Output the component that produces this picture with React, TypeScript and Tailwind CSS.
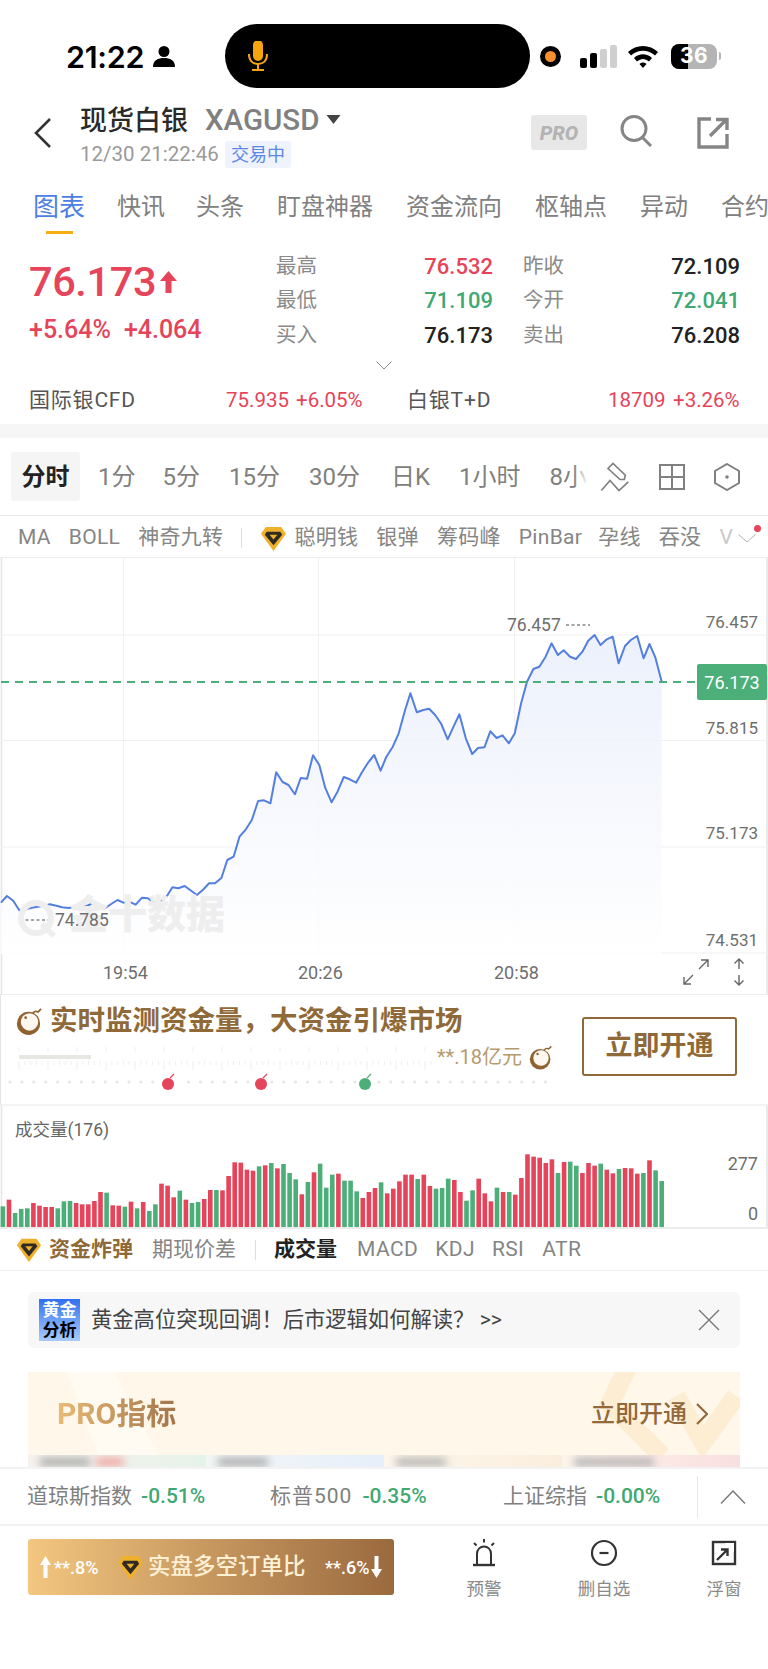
import React from "react";

const linePts: [number, number][] = [[2,1028],[14,1008],[27,1022],[40,1052],[52,1048],[65,1043],[77,1040],[90,1037],[102,1033],[115,1037],[127,1042],[140,1044],[152,1041],[165,1041],[177,1038],[190,1029],[202,1032],[215,1044],[227,1032],[240,1020],[252,1028],[265,1026],[277,1034],[290,1013],[302,1015],[315,1029],[327,1024],[340,1010],[352,982],[364,985],[377,978],[389,991],[402,1005],[414,990],[427,970],[439,970],[452,954],[464,900],[477,890],[489,830],[502,808],[514,780],[527,723],[539,721],[552,730],[564,637],[577,666],[589,675],[602,703],[614,654],[627,656],[639,586],[652,615],[664,683],[677,727],[689,695],[702,651],[714,658],[727,668],[739,637],[752,607],[764,585],[777,632],[789,590],[802,560],[814,520],[827,450],[838,400],[851,457],[864,450],[876,446],[889,466],[901,492],[914,538],[926,500],[938,463],[951,535],[964,582],[976,564],[989,562],[1001,514],[1014,534],[1026,526],[1039,550],[1051,520],[1064,430],[1076,365],[1089,327],[1101,320],[1114,290],[1126,250],[1139,285],[1151,271],[1164,290],[1176,297],[1189,275],[1201,242],[1214,225],[1226,255],[1239,238],[1251,230],[1263,310],[1276,258],[1288,240],[1301,228],[1314,295],[1326,252],[1338,292],[1351,365]];

const toPt = ([x, y]: [number, number]) => `${(x / 2.0417).toFixed(1)},${(y / 3 + 2).toFixed(1)}`;
const linePath = linePts.map(toPt).join(" ");
const areaPath = `${linePath} 661.7,396 1,396`;

const bars: [number, string][] = [[680,"g"],[660,"r"],[700,"g"],[688,"g"],[686,"g"],[670,"r"],[678,"r"],[682,"r"],[682,"r"],[686,"g"],[665,"g"],[664,"g"],[670,"r"],[674,"r"],[674,"r"],[664,"r"],[637,"r"],[639,"g"],[677,"r"],[678,"r"],[681,"g"],[666,"r"],[686,"g"],[667,"r"],[694,"g"],[674,"g"],[612,"r"],[618,"r"],[653,"r"],[633,"g"],[660,"r"],[670,"g"],[667,"g"],[658,"r"],[631,"r"],[631,"g"],[632,"r"],[589,"r"],[548,"r"],[549,"r"],[570,"r"],[573,"r"],[560,"g"],[557,"r"],[550,"g"],[566,"r"],[553,"g"],[580,"g"],[599,"g"],[644,"r"],[607,"g"],[578,"r"],[552,"g"],[624,"g"],[585,"g"],[582,"r"],[603,"g"],[603,"g"],[635,"g"],[655,"r"],[637,"r"],[625,"r"],[608,"g"],[641,"r"],[627,"r"],[605,"r"],[585,"r"],[585,"r"],[598,"g"],[585,"r"],[619,"r"],[627,"g"],[625,"g"],[597,"g"],[601,"r"],[637,"r"],[663,"g"],[632,"g"],[597,"r"],[641,"r"],[665,"r"],[624,"g"],[637,"r"],[637,"g"],[645,"r"],[595,"r"],[524,"r"],[531,"r"],[534,"r"],[550,"r"],[539,"r"],[580,"g"],[547,"r"],[546,"g"],[558,"g"],[580,"r"],[550,"r"],[558,"r"],[552,"g"],[570,"r"],[581,"r"],[568,"g"],[565,"r"],[566,"r"],[582,"r"],[580,"g"],[542,"r"],[572,"g"],[604,"g"]];

function Gem({ className }: { className: string }) {
  return (
    <svg viewBox="0 0 28 28" className={className}>
      <polygon points="6,2 22,2 27,9 14,27 1,9" fill="#efb02c" />
      <polygon points="7,7 21,7 23,10 14,21 5,10" fill="#2f2a22" />
      <polygon points="10,10 18,10 14,15" fill="#efb02c" />
    </svg>
  );
}

function Bomb({ className }: { className: string }) {
  return (
    <svg viewBox="0 0 28 30" className={className}>
      <path d="M17 8 C18 4 21 4 23 5 L26 2" fill="none" stroke="#8f6230" strokeWidth="1.8" />
      <circle cx="13" cy="17" r="12" fill="#8f6230" />
      <circle cx="14" cy="15.5" r="9" fill="#fdf8ef" />
      <circle cx="10" cy="11" r="1.4" fill="#8f6230" />
    </svg>
  );
}

function StatRow({ a, av, ac, b, bv, bc }: { a: string; av: string; ac: string; b: string; bv: string; bc: string }) {
  return (
    <div className="grid grid-cols-[217px_217px] gap-x-[30px] h-[34.5px] items-center">
      <div className="flex justify-between items-center">
        <span className="text-[20.5px] text-[#8a8a8a]">{a}</span>
        <span className={`text-[22px] font-medium ${ac}`}>{av}</span>
      </div>
      <div className="flex justify-between items-center">
        <span className="text-[20.5px] text-[#8a8a8a]">{b}</span>
        <span className={`text-[22px] font-medium ${bc}`}>{bv}</span>
      </div>
    </div>
  );
}

export default function App() {
  return (
    <div className="w-[768px] h-[1669px] bg-white flex flex-col overflow-hidden font-['Roboto','Noto_Sans_CJK_SC',sans-serif] text-[#222]">
      {/* status bar */}
      <div className="h-[100px] pt-[24px] shrink-0">
        <div className="h-[64px] flex items-center">
          <span className="ml-[66px] w-[80px] mt-[1px] text-[30.5px] font-semibold text-black font-['Inter',sans-serif] tracking-[-0.3px] whitespace-nowrap">21:22</span>
          <svg viewBox="0 0 22 21" className="ml-[7px] w-[22px] h-[21px]">
            <circle cx="11" cy="5.5" r="5.5" fill="#000" />
            <path d="M0 21 C0 14 5 12 11 12 C17 12 22 14 22 21 Z" fill="#000" />
          </svg>
          <div className="ml-[50px] w-[305px] h-[64px] bg-black rounded-full flex items-center pl-[23px]">
            <svg viewBox="0 0 20 30" className="w-[20px] h-[30px]" fill="none" stroke="#f7a50f" strokeWidth="2">
              <rect x="6" y="0" width="8" height="19" rx="4" fill="#f7a50f" />
              <path d="M1 13 C1 20 5 23 10 23 C15 23 19 20 19 13" />
              <path d="M10 23 V29 M4 29 H16" />
            </svg>
          </div>
          <div className="ml-[10px] w-[21px] h-[21px] rounded-full bg-black flex items-center justify-center">
            <div className="w-[11px] h-[11px] rounded-full bg-[#f98f2c]" />
          </div>
          <div className="ml-[19px] flex items-end gap-[3px] h-[23px]">
            <div className="w-[7px] h-[10px] rounded-[2px] bg-black" />
            <div className="w-[7px] h-[15px] rounded-[2px] bg-black" />
            <div className="w-[7px] h-[19px] rounded-[2px] bg-[#cfcfcf]" />
            <div className="w-[7px] h-[23px] rounded-[2px] bg-[#cfcfcf]" />
          </div>
          <svg viewBox="1 0 30 24" className="ml-[10px] w-[32px] h-[24px]">
            <path d="M1 8 C9 0 23 0 31 8 L28 11.5 C21.5 5 10.5 5 4 11.5 Z" fill="#000" />
            <path d="M7 14 C12 9 20 9 25 14 L22 17.5 C18 14 14 14 10 17.5 Z" fill="#000" />
            <path d="M12.5 20 C14.5 18 17.5 18 19.5 20 L16 24 Z" fill="#000" />
          </svg>
          <div className="ml-[12px] relative w-[46px] h-[25px] rounded-[8px] overflow-hidden bg-[#b4b4b4] flex items-center justify-center">
            <div className="absolute left-0 top-0 bottom-0 w-[17px] bg-black" />
            <span className="relative text-[21px] font-bold text-white font-['Inter',sans-serif] tracking-[0.5px]">36</span>
          </div>
          <div className="ml-[2px] w-[2px] h-[8px] rounded-r bg-[#b4b4b4]" />
        </div>
      </div>

      {/* header */}
      <div className="h-[90px] shrink-0 flex items-start">
        <svg viewBox="0 0 18 30" className="ml-[33px] mt-[18px] w-[18px] h-[30px]" fill="none" stroke="#333" strokeWidth="2.6">
          <path d="M17 1 L3 15 L17 29" />
        </svg>
        <div className="ml-[29px] flex flex-col">
          <div className="flex items-center h-[36px] mt-[3px]">
            <span className="text-[27px] font-medium text-[#2a2a2a] leading-none">现货白银</span>
            <span className="ml-[17px] text-[29.5px] font-medium text-[#808080] leading-none">XAGUSD</span>
            <svg viewBox="0 0 14 9" className="ml-[6px] w-[15px] h-[9px] mb-[4px]"><polygon points="0,0 14,0 7,9" fill="#444" /></svg>
          </div>
          <div className="flex items-center">
            <span className="text-[20.5px] text-[#9a9a9a] w-[145px] whitespace-nowrap">12/30 21:22:46</span>
            <span className="w-[66px] h-[27px] rounded-[3px] bg-[#eef3fe] text-[#5b87e6] text-[18px] flex items-center justify-center">交易中</span>
          </div>
        </div>
        <div className="ml-auto flex items-start pr-[39px] mt-[15px]">
          <div className="w-[56px] h-[35px] rounded-[3px] bg-[#e7e7e7] flex items-center justify-center text-[20px] font-extrabold italic text-[#b3b3b3]">PRO</div>
          <svg viewBox="0 0 32 32" className="ml-[33px] w-[32px] h-[32px]" fill="none" stroke="#858585" strokeWidth="3">
            <circle cx="14" cy="13.5" r="12" />
            <path d="M23 23 L31 31" />
          </svg>
          <svg viewBox="0 0 32 32" className="ml-[45px] mt-[2px] w-[32px] h-[32px]" fill="none" stroke="#858585" strokeWidth="3.4">
            <path d="M14 2 H2 V30 H30 V17" />
            <path d="M13 19 L29 3 M19 2.5 H30 V13" />
          </svg>
        </div>
      </div>

      {/* tabs */}
      <div className="h-[48px] shrink-0 flex gap-[33px] pl-[33px] overflow-hidden text-[24px] leading-[34px] text-[#808080] whitespace-nowrap">
        <div className="flex flex-col shrink-0">
          <span className="text-[#4f7fe3] text-[26px]">图表</span>
          <div className="mx-auto mt-[7px] w-[27px] h-[3px] bg-[#f6ad14]" />
        </div>
        <span className="shrink-0 -ml-[1px]">快讯</span>
        <span className="shrink-0 -ml-[2px]">头条</span>
        <span className="shrink-0">盯盘神器</span>
        <span className="shrink-0">资金流向</span>
        <span className="shrink-0">枢轴点</span>
        <span className="shrink-0">异动</span>
        <span className="shrink-0">合约</span>
      </div>

      {/* quote */}
      <div className="h-[115px] shrink-0 flex">
        <div className="w-[276px] pl-[29px] pt-[19px] shrink-0">
          <div className="flex items-center h-[50px]">
            <span className="text-[41.5px] font-medium text-[#e5445a] tracking-[-0.4px] leading-none">76.173</span>
            <svg viewBox="0 0 17 22" className="ml-[4px] w-[17px] h-[22px]"><path d="M8.5 0 L17 10 H11.5 V22 H5.5 V10 H0 Z" fill="#e5445a" /></svg>
          </div>
          <div className="mt-[8px] flex gap-[13px] h-[30px] items-center text-[25px] font-medium text-[#e5445a] whitespace-nowrap">
            <span>+5.64%</span>
            <span>+4.064</span>
          </div>
        </div>
        <div className="pt-[11px]">
          <StatRow a="最高" av="76.532" ac="text-[#e5445a]" b="昨收" bv="72.109" bc="text-[#222]" />
          <StatRow a="最低" av="71.109" ac="text-[#3fa873]" b="今开" bv="72.041" bc="text-[#3fa873]" />
          <StatRow a="买入" av="76.173" ac="text-[#222]" b="卖出" bv="76.208" bc="text-[#222]" />
        </div>
      </div>
      <div className="h-[24px] shrink-0 flex items-center justify-center">
        <svg viewBox="0 0 16 9" className="w-[16px] h-[9px]" fill="none" stroke="#8a8a8a" strokeWidth="1"><path d="M0.5 0.5 L8 8 L15.5 0.5" /></svg>
      </div>
      <div className="h-[47px] shrink-0 flex items-center text-[20.5px] whitespace-nowrap">
        <span className="ml-[29px] w-[197px] text-[21px] tracking-[0.8px] text-[#555]">国际银CFD</span>
        <span className="w-[70px] text-[#e5445a]">75.935</span>
        <span className="w-[111px] text-[#e5445a]">+6.05%</span>
        <span className="w-[201px] text-[21px] tracking-[0.8px] text-[#555]">白银T+D</span>
        <span className="w-[65px] text-[#e5445a]">18709</span>
        <span className="text-[#e5445a]">+3.26%</span>
      </div>
      <div className="h-[14px] shrink-0 bg-[#f6f6f6]" />

      {/* timeframes */}
      <div className="h-[78px] shrink-0 flex items-center pl-[11px] border-b border-[#e8e8e8]">
        <div className="w-[69px] h-[49px] rounded-[3px] bg-[#f5f5f5] flex items-center justify-center text-[24px] font-bold text-[#222] shrink-0">分时</div>
        <div className="ml-[18px] w-[490px] shrink-0 flex gap-[29px] overflow-hidden whitespace-nowrap text-[24px] text-[#808080] relative">
          <span>1分</span>
          <span className="-ml-[2px]">5分</span>
          <span>15分</span>
          <span>30分</span>
          <span className="ml-[2px]">日K</span>
          <span>1小时</span>
          <span>8小时</span>
          <div className="absolute right-0 top-0 bottom-0 w-[14px] bg-gradient-to-r from-white/0 to-white" />
        </div>
        <svg viewBox="28 30 90 95" className="ml-[12px] w-[30px] h-[32px]" fill="none" stroke="#808080" strokeWidth="5">
          <path d="M52 52 L67 37 L104 72 L101 85 L88 85 Z" />
          <path d="M32 118 L58 88 L85 118 L113 92" />
        </svg>
        <svg viewBox="0 0 26 26" className="ml-[29px] w-[26px] h-[26px]" fill="none" stroke="#808080" strokeWidth="2">
          <rect x="1" y="1" width="24" height="24" />
          <path d="M13 1 V25 M1 13 H25" />
        </svg>
        <svg viewBox="0 0 26 28" className="ml-[29px] w-[26px] h-[28px]" fill="none" stroke="#808080" strokeWidth="2">
          <polygon points="13,1 25,8 25,20 13,27 1,20 1,8" />
          <circle cx="13" cy="14" r="1.8" fill="#808080" stroke="none" />
        </svg>
      </div>

      {/* indicators */}
      <div className="h-[42px] shrink-0 pt-[3px] flex items-center pl-[18px] gap-[18px] text-[21px] tracking-[0.3px] text-[#858585] whitespace-nowrap overflow-hidden relative border-b border-[#ececec]">
        <span>MA</span>
        <span>BOLL</span>
        <span>神奇九转</span>
        <div className="w-px h-[20px] bg-[#dedede] shrink-0" />
        <div className="flex items-center gap-[7px]">
          <Gem className="w-[27px] h-[27px]" />
          <span>聪明钱</span>
        </div>
        <span>银弹</span>
        <span>筹码峰</span>
        <span>PinBar</span>
        <span className="-ml-[2px]">孕线</span>
        <span>吞没</span>
        <span className="text-[#c8c8c8]">V</span>
        <svg viewBox="0 0 18 9" className="absolute left-[738px] top-[18px] w-[18px] h-[9px]" fill="none" stroke="#b0b0b0" strokeWidth="1"><path d="M0.5 0.5 L9 8 L17.5 0.5" /></svg>
        <div className="absolute left-[754px] top-[9px] w-[7px] h-[7px] rounded-full bg-[#e5445a]" />
      </div>

      {/* chart */}
      <div className="h-[437px] shrink-0 relative border-b border-[#ececec]">
        <svg viewBox="0 0 768 436" className="absolute inset-0 w-[768px] h-[436px]">
          <defs>
            <linearGradient id="area" x1="0" y1="0" x2="0" y2="1">
              <stop offset="0" stopColor="#e9eefb" />
              <stop offset="1" stopColor="#ffffff" />
            </linearGradient>
          </defs>
          <path d="M1.5 0 V436 M767 0 V436" stroke="#e4e4e4" strokeWidth="1.5" />
          <path d="M123.5 0 V395 M318.5 0 V395 M514.5 0 V395" stroke="#f0f0f0" strokeWidth="1" />
          <path d="M1 77 H767 M1 182.5 H767 M1 289 H767 M1 395 H767" stroke="#efefef" strokeWidth="1.2" />
          <polygon points={areaPath} fill="url(#area)" opacity="0.85" />
          <polyline points={linePath} fill="none" stroke="#537fe0" strokeWidth="2" strokeLinejoin="round" />
          <path d="M1 124 H697" stroke="#4caf79" strokeWidth="2" strokeDasharray="8 6" />
          <path d="M20 362 H52 M566 67 H590" stroke="#888" strokeWidth="1.5" strokeDasharray="3 2.5" />
          <circle cx="36" cy="360" r="15" fill="none" stroke="#eeeeee" strokeWidth="6" />
          <path d="M42 366 L54 378" stroke="#eeeeee" strokeWidth="6" />
        </svg>
        <span className="absolute left-[69px] top-[332px] text-[39px] leading-[50px] font-black text-[#eeeeee]">金十数据</span>
        <span className="absolute left-[55px] top-[351px] text-[17.5px] leading-[22px] text-[#6e6e6e]">74.785</span>
        <span className="absolute left-[507px] top-[56px] text-[17.5px] leading-[22px] text-[#6e6e6e]">76.457</span>
        <span className="absolute right-[10px] top-[53px] text-[17px] leading-[22px] text-[#6e6e6e]">76.457</span>
        <span className="absolute right-[10px] top-[159px] text-[17px] leading-[22px] text-[#6e6e6e]">75.815</span>
        <span className="absolute right-[10px] top-[264px] text-[17px] leading-[22px] text-[#6e6e6e]">75.173</span>
        <span className="absolute right-[10px] top-[371px] text-[17px] leading-[22px] text-[#6e6e6e]">74.531</span>
        <div className="absolute left-[697px] top-[106px] w-[70px] h-[36px] rounded-[2px] bg-[#4caf79] text-white text-[18px] flex items-center justify-center">76.173</div>
        <span className="absolute left-[103px] top-[404px] w-[42px] text-center text-[18px] leading-[22px] text-[#6e6e6e]">19:54</span>
        <span className="absolute left-[298px] top-[404px] w-[42px] text-center text-[18px] leading-[22px] text-[#6e6e6e]">20:26</span>
        <span className="absolute left-[494px] top-[404px] w-[42px] text-center text-[18px] leading-[22px] text-[#6e6e6e]">20:58</span>
        <svg viewBox="0 0 26 26" className="absolute left-[683px] top-[401px] w-[26px] h-[26px]" fill="none" stroke="#666" strokeWidth="1.4">
          <path d="M16 10 L25 1 M18 1 H25 V8 M10 16 L1 25 M1 18 V25 H8" />
        </svg>
        <svg viewBox="0 0 12 28" className="absolute left-[733px] top-[400px] w-[12px] h-[28px]" fill="none" stroke="#666" strokeWidth="1.4">
          <path d="M6 1 V11 M1.5 5.5 L6 1 L10.5 5.5 M6 17 V27 M1.5 22.5 L6 27 L10.5 22.5" />
        </svg>
      </div>

      {/* banner */}
      <div className="h-[111px] shrink-0 flex border-b-2 border-[#f4f4f4] border-l-[1.5px] border-l-[#e4e4e4]">
        <div className="w-[578px] shrink-0">
          <div className="h-[40px] mt-[6px] flex items-center pl-[15px]">
            <Bomb className="w-[27px] h-[29px]" />
            <span className="ml-[7px] text-[27.5px] font-bold text-[#8f6a38] whitespace-nowrap">实时监测资金量，大资金引爆市场</span>
          </div>
          <div className="h-[32px] flex items-center pl-[16px]">
            <svg viewBox="0 0 416 26" className="w-[416px] h-[26px] shrink-0">
              {Array.from({ length: 72 }).map((_, i) => {
                const h = i % 5 === 0 ? 9 : 4;
                return <path key={i} d={`M${2 + i * 5.8} ${8 - (h - 4)} V8 M${2 + i * 5.8} 17 V${17 + h}`} stroke="#efefef" strokeWidth="1" />;
              })}
              <rect x="2" y="11" width="72" height="4" fill="#e7e7e2" />
            </svg>
            <span className="ml-[4px] w-[92px] shrink-0 text-[20px] text-[#b59a6d] whitespace-nowrap">**.18亿元</span>
            <Bomb className="w-[24px] h-[27px] shrink-0" />
          </div>
          <svg viewBox="0 0 576 20" className="w-[576px] h-[20px]">
            {Array.from({ length: 46 }).map((_, i) => {
              const x = 9 + i * 11.9;
              if (Math.abs(x - 167) < 9 || Math.abs(x - 260) < 9 || Math.abs(x - 364) < 9) return null;
              return <circle key={i} cx={x} cy="9" r="1.6" fill="#e6e6e6" />;
            })}
            <circle cx="167" cy="11" r="6" fill="#e5445a" />
            <path d="M169 5 L173 1" stroke="#e5445a" strokeWidth="1.2" />
            <circle cx="260" cy="11" r="6" fill="#e5445a" />
            <path d="M262 5 L266 1" stroke="#e5445a" strokeWidth="1.2" />
            <circle cx="364" cy="11" r="6" fill="#4caf79" />
            <path d="M366 5 L370 1" stroke="#4caf79" strokeWidth="1.2" />
          </svg>
        </div>
        <div className="ml-[3px] mt-[22px] w-[155px] h-[59px] rounded-[3px] border-2 border-[#8f6a38] flex items-center justify-center text-[27px] font-bold text-[#8f6a38]">立即开通</div>
      </div>

      {/* volume */}
      <div className="h-[123px] shrink-0 relative border-b-2 border-[#ececec]">
        <svg viewBox="0 0 768 121" className="absolute inset-0 w-[768px] h-[121px]">
          <path d="M1.5 0 V121 M767 0 V121" stroke="#e4e4e4" strokeWidth="1.5" />
          {bars.map(([t, c], i) => {
            const h = (742 - t) / 3;
            return <rect key={i} x={0.6 + i * 6.1} y={121 - h} width="4.6" height={h} fill={c === "r" ? "#e5445a" : "#4caf79"} />;
          })}
        </svg>
        <span className="absolute left-[15px] top-[13px] text-[17.5px] leading-[22px] text-[#666]">成交量(176)</span>
        <span className="absolute right-[10px] top-[47px] text-[18px] leading-[22px] text-[#6e6e6e]">277</span>
        <span className="absolute right-[10px] top-[97px] text-[18px] leading-[22px] text-[#6e6e6e]">0</span>
      </div>

      {/* lower tabs */}
      <div className="h-[42px] shrink-0 flex items-center pl-[16px] text-[21px] text-[#858585] whitespace-nowrap border-b border-[#efefef]">
        <Gem className="w-[26px] h-[26px]" />
        <span className="ml-[7px] font-bold text-[#8f6a38]">资金炸弹</span>
        <span className="ml-[19px]">期现价差</span>
        <div className="ml-[19px] w-px h-[20px] bg-[#dedede]" />
        <span className="ml-[18px] font-bold text-[#222]">成交量</span>
        <span className="ml-[20px] tracking-[0.4px]">MACD</span>
        <span className="ml-[17px] tracking-[0.4px]">KDJ</span>
        <span className="ml-[17px] tracking-[0.4px]">RSI</span>
        <span className="ml-[18px] tracking-[0.4px]">ATR</span>
      </div>

      {/* scroll content */}
      <div className="h-[196px] shrink-0 overflow-hidden px-[28px] pt-[21px]">
        <div className="h-[56px] rounded-[5px] bg-[#f7f7f7] flex items-center pl-[11px] pr-[20px]">
          <div className="w-[41px] h-[42px] bg-gradient-to-b from-[#2f6ff0] to-[#a9cbfb] flex flex-col items-center justify-center text-[17px] leading-[20px] font-bold">
            <span className="text-white">黄金</span>
            <span className="text-black">分析</span>
          </div>
          <span className="ml-[11px] text-[21.3px] text-[#444] whitespace-nowrap">黄金高位突现回调！后市逻辑如何解读？ &gt;&gt;</span>
          <svg viewBox="0 0 22 22" className="ml-auto w-[22px] h-[22px]" fill="none" stroke="#777" strokeWidth="1.4"><path d="M1 1 L21 21 M21 1 L1 21" /></svg>
        </div>
        <div className="mt-[24px] h-[100px] relative overflow-hidden bg-[#fff7ea] flex flex-col">
          <svg viewBox="0 0 712 100" className="absolute inset-0 w-[712px] h-[100px]" fill="none">
            <polygon points="40,0 86,0 130,83 70,83" fill="#ffffff" opacity="0.45" />
            <path d="M600 -6 L582 32 L634 84" stroke="#fdeed3" strokeWidth="19" />
            <path d="M648 24 L675 70 L708 24" stroke="#fdeed3" strokeWidth="19" />
          </svg>
          <div className="relative h-[83px] flex items-center pl-[29px] pr-[32px]">
            <span className="text-[30px] font-bold bg-gradient-to-r from-[#e8bb76] to-[#a2754b] bg-clip-text text-transparent">PRO指标</span>
            <span className="ml-auto text-[24px] font-medium text-[#93683a]">立即开通</span>
            <svg viewBox="0 0 12 22" className="ml-[9px] w-[12px] h-[22px]" fill="none" stroke="#93683a" strokeWidth="2.2"><path d="M1 1 L11 11 L1 21" /></svg>
          </div>
          <div className="relative h-[17px] grid grid-cols-4 overflow-hidden">
            <div className="bg-gradient-to-r from-[#f7f2ec] to-[#e6f3ea] pl-[12px] pt-[3px] flex gap-[6px]">
              <div className="w-[50px] h-[8px] bg-[#a8a8a8] blur-[4px]" />
              <div className="w-[28px] h-[8px] bg-[#f2a0a0] blur-[4px]" />
            </div>
            <div className="bg-gradient-to-r from-[#f3f6f5] to-[#e6effb] pl-[12px] pt-[3px]"><div className="w-[50px] h-[8px] bg-[#a8a8a8] blur-[4px]" /></div>
            <div className="bg-gradient-to-r from-[#fdf6ec] to-[#fbeedd] pl-[12px] pt-[3px]"><div className="w-[50px] h-[8px] bg-[#b0b0b0] blur-[4px]" /></div>
            <div className="bg-gradient-to-r from-[#fdf4ec] to-[#f9dfdf] pl-[12px] pt-[3px]"><div className="w-[80px] h-[8px] bg-[#b0b0b0] blur-[4px]" /></div>
          </div>
        </div>
      </div>

      {/* ticker */}
      <div className="h-[59px] shrink-0 bg-white border-t-2 border-t-[#f2f2f2] border-b-2 border-b-[#f2f2f2] flex items-center text-[21px] whitespace-nowrap">
        <div className="ml-[27px] w-[243px] flex gap-[9px]"><span className="text-[#808080]">道琼斯指数</span><span className="text-[#3fa873] font-medium">-0.51%</span></div>
        <div className="w-[233px] flex gap-[10px]"><span className="text-[#808080] tracking-[1px]">标普500</span><span className="text-[#3fa873] font-medium">-0.35%</span></div>
        <div className="w-[194px] flex gap-[9px]"><span className="text-[#808080]">上证综指</span><span className="text-[#3fa873] font-medium">-0.00%</span></div>
        <div className="w-px h-[42px] bg-[#e6e6e6]" />
        <svg viewBox="0 0 26 14" className="ml-[22px] w-[26px] h-[14px]" fill="none" stroke="#777" strokeWidth="1.4"><path d="M1 13.5 L13 1 L25 13.5" /></svg>
      </div>

      {/* bottom actions */}
      <div className="flex-1 flex items-start pt-[13px] pl-[28px]">
        <div className="w-[366px] h-[56px] shrink-0 rounded-[3px] bg-gradient-to-r from-[#f3c780] to-[#9a6a3f] flex items-center pl-[12px] text-white whitespace-nowrap">
          <svg viewBox="0 0 11 22" className="w-[11px] h-[22px] shrink-0"><path d="M5.5 0 L11 9 H7.5 V22 H3.5 V9 H0 Z" fill="#fff" /></svg>
          <span className="ml-[3px] w-[63px] shrink-0 text-[18px] font-medium">**.8%</span>
          <Gem className="w-[27px] h-[27px] shrink-0" />
          <span className="ml-[4px] w-[177px] shrink-0 text-[22.5px] font-medium text-[#fdf0d5]">实盘多空订单比</span>
          <span className="w-[46px] shrink-0 text-[18px] font-medium">**.6%</span>
          <svg viewBox="0 0 11 22" className="w-[11px] h-[22px] shrink-0"><path d="M3.5 0 H7.5 V13 H11 L5.5 22 L0 13 H3.5 Z" fill="#fff" /></svg>
        </div>
        <div className="ml-[46px] w-[88px] shrink-0 flex flex-col items-center">
          <svg viewBox="0 0 28 28" className="w-[28px] h-[28px]" fill="none" stroke="#333" strokeWidth="2">
            <path d="M7 25 V15 C7 5 21 5 21 15 V25" />
            <path d="M3 26 H25" strokeWidth="2.4" />
            <path d="M14 0 V3.5 M4 4 L6.5 6.5 M24 4 L21.5 6.5" />
          </svg>
          <span className="mt-[9px] text-[17.5px] text-[#8a8a8a]">预警</span>
        </div>
        <div className="ml-[32px] w-[88px] shrink-0 flex flex-col items-center">
          <svg viewBox="0 0 28 28" className="w-[28px] h-[28px]" fill="none" stroke="#333" strokeWidth="2.2">
            <circle cx="14" cy="14" r="12" />
            <path d="M9.5 14 H18.5" />
          </svg>
          <span className="mt-[9px] text-[17.5px] text-[#8a8a8a]">删自选</span>
        </div>
        <div className="ml-[32px] w-[88px] shrink-0 flex flex-col items-center">
          <svg viewBox="0 0 28 28" className="w-[28px] h-[28px]" fill="none" stroke="#333" strokeWidth="2.4">
            <rect x="3" y="3" width="22" height="22" />
            <rect x="15" y="4" width="9" height="9" fill="#fff" stroke="none" />
            <path d="M7 21 L17 11 M11 10.5 H17.5 V17" />
          </svg>
          <span className="mt-[9px] text-[17.5px] text-[#8a8a8a]">浮窗</span>
        </div>
      </div>
    </div>
  );
}
